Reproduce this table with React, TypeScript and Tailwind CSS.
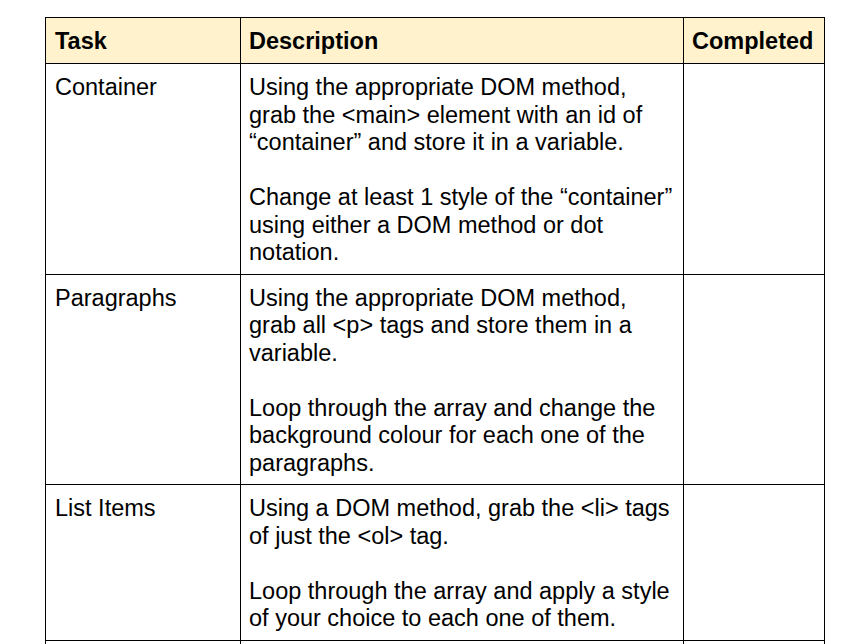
import React from 'react';

const rows = [
  {
    task: 'Container',
    paras: [
      'Using the appropriate DOM method, grab the <main> element with an id of \u201Ccontainer\u201D and store it in a variable.',
      'Change at least 1 style of the \u201Ccontainer\u201D using either a DOM method or dot notation.',
    ],
  },
  {
    task: 'Paragraphs',
    paras: [
      'Using the appropriate DOM method, grab all <p> tags and store them in a variable.',
      'Loop through the array and change the background colour for each one of the paragraphs.',
    ],
  },
  {
    task: 'List Items',
    paras: [
      'Using a DOM method, grab the <li> tags of just the <ol> tag.',
      'Loop through the array and apply a style of your choice to each one of them.',
    ],
  },
];

export default function App() {
  return (
    <div className="h-[644px] w-[862px] overflow-hidden bg-white pl-[45px] pt-[17px] font-['Liberation_Sans',Arial,sans-serif] text-[23.5px] leading-[27.5px] text-black">
      <table className="w-[780px] table-fixed border-collapse">
        <colgroup>
          <col className="w-[195px]" />
          <col className="w-[443px]" />
          <col className="w-[141px]" />
        </colgroup>
        <thead>
          <tr className="h-[46px] bg-[#fff2cc]">
            <th className="border border-black pl-[9px] pr-[4px] pt-[2px] text-left font-bold">Task</th>
            <th className="border border-black pl-[8px] pr-[4px] pt-[2px] text-left font-bold">Description</th>
            <th className="border border-black pl-[8px] pr-[4px] pt-[2px] text-left font-bold">Completed</th>
          </tr>
        </thead>
        <tbody>
          {rows.map((row) => (
            <tr key={row.task}>
              <td className="border border-black pl-[9px] pr-[4px] pt-[10px] pb-[7px] align-top">{row.task}</td>
              <td className="border border-black pl-[8px] pr-[4px] pt-[10px] pb-[7px] align-top">
                <div className="flex flex-col gap-[27.5px]">
                  {row.paras.map((p, i) => (
                    <p key={i}>{p}</p>
                  ))}
                </div>
              </td>
              <td className="border border-black align-top"></td>
            </tr>
          ))}
          {/* next row continues below the fold */}
          <tr className="h-[60px]">
            <td className="border border-black"></td>
            <td className="border border-black"></td>
            <td className="border border-black"></td>
          </tr>
        </tbody>
      </table>
    </div>
  );
}
